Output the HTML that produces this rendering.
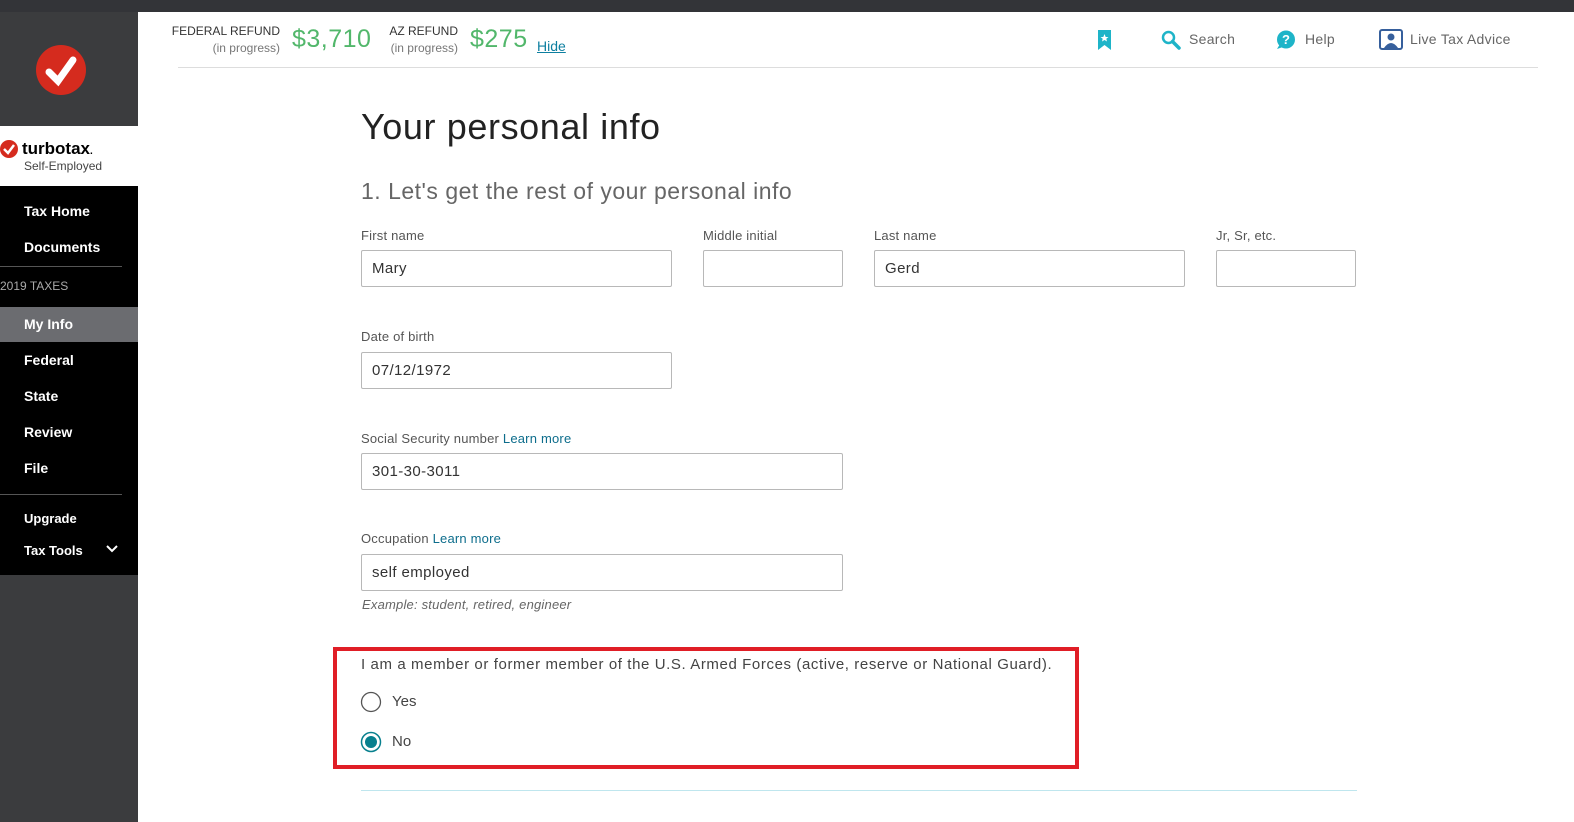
<!DOCTYPE html>
<html><head><meta charset="utf-8"><style>
*{margin:0;padding:0;box-sizing:border-box}
body{width:1574px;height:822px;overflow:hidden;background:#fff;font-family:"Liberation Sans",sans-serif;position:relative;color:#393a3d}
.a{position:absolute;white-space:nowrap}
.top{left:0;top:0;width:1574px;height:12px;background:#333438}
.side{left:0;top:12px;width:138px;height:810px;background:#3b3c3e}
.nav{left:0;top:186px;width:138px;height:389px;background:#000}
.ni{position:absolute;left:24px;color:#fff;font-size:14px;font-weight:bold}
.lbl{position:absolute;font-size:13px;color:#555;letter-spacing:0.2px;white-space:nowrap}
.inp{position:absolute;height:37px;border:1px solid #b8b8b8;border-radius:2px;font-size:15px;padding:9px 10px;color:#333;letter-spacing:0.4px}
.lm{color:#0d6d8c}
</style></head><body>
<div class="a top"></div>
<div class="a side"></div>
<svg class="a" style="left:36px;top:45px" width="50" height="50"><circle cx="25" cy="25" r="25" fill="#d52b1e"/><path d="M13 27 L22 36 L37 15" stroke="#fff" stroke-width="7" fill="none" stroke-linecap="round"/></svg>
<div class="a" style="left:0;top:126px;width:138px;height:60px;background:#fff"></div>
<svg class="a" style="left:0;top:139px" width="20" height="20"><circle cx="9" cy="10" r="9" fill="#d52b1e"/><path d="M4 10 L8 14 L14 6" stroke="#fff" stroke-width="2.5" fill="none"/></svg>
<div class="a" style="left:22px;top:139px;font-size:17px;font-weight:bold;color:#000">turbotax<span style="font-size:10px">.</span></div>
<div class="a" style="left:24px;top:159px;font-size:12px;color:#444">Self-Employed</div>
<div class="a nav"></div>
<div class="ni" style="top:203px">Tax Home</div>
<div class="ni" style="top:239px">Documents</div>
<div class="a" style="left:0;top:266px;width:122px;height:1px;background:#555"></div>
<div class="a" style="left:0;top:279px;font-size:12px;color:#aaa">2019 TAXES</div>
<div class="a" style="left:0;top:307px;width:138px;height:35px;background:#6b6c70"></div>
<div class="ni" style="top:316px">My Info</div>
<div class="ni" style="top:352px">Federal</div>
<div class="ni" style="top:388px">State</div>
<div class="ni" style="top:424px">Review</div>
<div class="ni" style="top:460px">File</div>
<div class="a" style="left:0;top:494px;width:122px;height:1px;background:#555"></div>
<div class="ni" style="top:511px;font-size:13px">Upgrade</div>
<div class="ni" style="top:543px;font-size:13px">Tax Tools</div>
<svg class="a" style="left:106px;top:545px" width="12" height="8"><path d="M1 1 L6 6 L11 1" stroke="#fff" stroke-width="2" fill="none"/></svg>

<div class="a" style="left:170px;top:23px;font-size:12px;color:#333;text-align:right;width:110px;line-height:17px">FEDERAL REFUND<br><span style="color:#777">(in progress)</span></div>
<div class="a" style="left:292px;top:25px;font-size:25px;color:#52b76b;letter-spacing:0.5px">$3,710</div>
<div class="a" style="left:380px;top:23px;font-size:12px;color:#333;text-align:right;width:78px;line-height:17px">AZ REFUND<br><span style="color:#777">(in progress)</span></div>
<div class="a" style="left:470px;top:25px;font-size:25px;color:#52b76b;letter-spacing:0.5px">$275</div>
<div class="a" style="left:537px;top:38px;font-size:14px;color:#0d7fa0;text-decoration:underline">Hide</div>
<svg class="a" style="left:1097px;top:30px" width="15" height="20"><path d="M1 0 H14 V20 L7.5 15 L1 20Z" fill="#1eb4c8"/><path d="M7.5 4 L8.7 7 L11.5 7 L9.3 8.8 L10 11.5 L7.5 10 L5 11.5 L5.7 8.8 L3.5 7 L6.3 7Z" fill="#fff"/></svg>
<svg class="a" style="left:1161px;top:30px" width="20" height="20"><circle cx="7.5" cy="7.5" r="5.5" stroke="#1eb4c8" stroke-width="2.5" fill="none"/><path d="M11.5 11.5 L18 18" stroke="#1eb4c8" stroke-width="3.5" stroke-linecap="round"/></svg>
<div class="a" style="left:1189px;top:31px;font-size:14px;color:#666;letter-spacing:0.3px">Search</div>
<svg class="a" style="left:1276px;top:30px" width="20" height="20"><circle cx="10" cy="9.5" r="9" fill="#1eb4c8"/><path d="M1 19 L4 14 L7 17Z" fill="#1eb4c8"/><text x="10" y="14" font-size="13" font-weight="bold" fill="#fff" text-anchor="middle" font-family="Liberation Sans">?</text></svg>
<div class="a" style="left:1305px;top:31px;font-size:14px;color:#666;letter-spacing:0.3px">Help</div>
<svg class="a" style="left:1379px;top:29px" width="24" height="22"><rect x="1" y="1" width="22" height="19" rx="2" fill="none" stroke="#365f9c" stroke-width="2"/><circle cx="12" cy="8" r="3.5" fill="#365f9c"/><path d="M5 19 Q12 9 19 19Z" fill="#365f9c"/></svg>
<div class="a" style="left:1410px;top:31px;font-size:14px;color:#666;letter-spacing:0.3px">Live Tax Advice</div>
<div class="a" style="left:178px;top:67px;width:1360px;height:1px;background:#ddd"></div>

<div class="a" style="left:361px;top:106px;font-size:36px;color:#222;letter-spacing:0.6px">Your personal info</div>
<div class="a" style="left:361px;top:178px;font-size:23px;color:#666;letter-spacing:0.5px">1. Let's get the rest of your personal info</div>
<div class="lbl" style="left:361px;top:228px">First name</div>
<div class="lbl" style="left:703px;top:228px">Middle initial</div>
<div class="lbl" style="left:874px;top:228px">Last name</div>
<div class="lbl" style="left:1216px;top:228px">Jr, Sr, etc.</div>
<div class="inp" style="left:361px;top:250px;width:311px">Mary</div>
<div class="inp" style="left:703px;top:250px;width:140px"></div>
<div class="inp" style="left:874px;top:250px;width:311px">Gerd</div>
<div class="inp" style="left:1216px;top:250px;width:140px"></div>
<div class="lbl" style="left:361px;top:329px">Date of birth</div>
<div class="inp" style="left:361px;top:352px;width:311px">07/12/1972</div>
<div class="lbl" style="left:361px;top:431px">Social Security number <span class="lm">Learn more</span></div>
<div class="inp" style="left:361px;top:453px;width:482px">301-30-3011</div>
<div class="lbl" style="left:361px;top:531px">Occupation <span class="lm">Learn more</span></div>
<div class="inp" style="left:361px;top:554px;width:482px">self employed</div>
<div class="lbl" style="left:362px;top:597px;font-style:italic;color:#666">Example: student, retired, engineer</div>
<div class="a" style="left:333px;top:647px;width:746px;height:122px;border:4px solid #e01e26"></div>
<div class="a" style="left:361px;top:656px;font-size:15px;color:#444;letter-spacing:0.6px">I am a member or former member of the U.S. Armed Forces (active, reserve or National Guard).</div>
<svg class="a" style="left:360px;top:691px" width="22" height="22"><circle cx="11" cy="11" r="9.5" fill="none" stroke="#555" stroke-width="1.3"/></svg>
<div class="a" style="left:392px;top:693px;font-size:15px;color:#444">Yes</div>
<svg class="a" style="left:360px;top:731px" width="22" height="22"><circle cx="11" cy="11" r="9.5" fill="none" stroke="#08808e" stroke-width="1.5"/><circle cx="11" cy="11" r="6" fill="#08808e"/></svg>
<div class="a" style="left:392px;top:733px;font-size:15px;color:#444">No</div>
<div class="a" style="left:361px;top:790px;width:996px;height:1px;background:#bfe6ee"></div>
</body></html>
